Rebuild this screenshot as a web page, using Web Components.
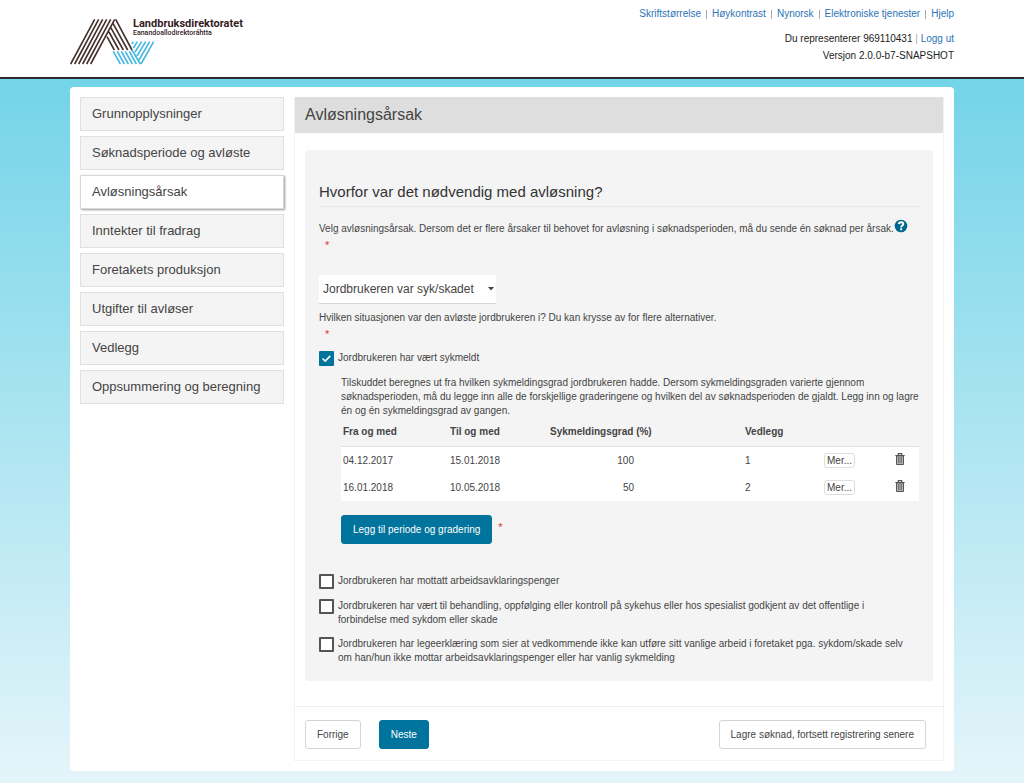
<!DOCTYPE html>
<html lang="no">
<head>
<meta charset="utf-8">
<meta name="viewport" content="width=device-width, initial-scale=1">
<title>Avløsningsårsak – Landbruksdirektoratet</title>
<style>
  html { min-height: 100%; }
  body {
    margin: 0;
    font: 10px/14px "Liberation Sans", Arial, sans-serif;
    color: #444;
    background: linear-gradient(#67d0e6, #e5f5fa);
    --accent: #00749c;
    --grey: #f4f4f4;
    --gutter: 70px;
  }
</style>
</head>
<body>
<site-header></site-header>
<app-shell>
  <step-menu slot="menu"></step-menu>
  <page-title>Avløsningsårsak</page-title>
  <question-card>
    <span slot="heading">Hvorfor var det nødvendig med avløsning?</span>
    <reason-select>Velg avløsningsårsak. Dersom det er flere årsaker til behovet for avløsning i søknadsperioden, må du sende én søknad per årsak.</reason-select>
    <situation-group>
      <span slot="legend">Hvilken situasjonen var den avløste jordbrukeren i? Du kan krysse av for flere alternativer.</span>
      <check-option checked>Jordbrukeren har vært sykmeldt</check-option>
      <sick-leave-periods></sick-leave-periods>
      <check-option>Jordbrukeren har mottatt arbeidsavklaringspenger</check-option>
      <check-option>Jordbrukeren har vært til behandling, oppfølging eller kontroll på sykehus eller hos spesialist godkjent av det offentlige i forbindelse med sykdom eller skade</check-option>
      <check-option>Jordbrukeren har legeerklæring som sier at vedkommende ikke kan utføre sitt vanlige arbeid i foretaket pga. sykdom/skade selv om han/hun ikke mottar arbeidsavklaringspenger eller har vanlig sykmelding</check-option>
    </situation-group>
  </question-card>
  <action-bar slot="actions">
    <app-button>Forrige</app-button>
    <app-button primary>Neste</app-button>
    <app-button slot="end">Lagre søknad, fortsett registrering senere</app-button>
  </action-bar>
</app-shell>

<script>
  const define = (name, html, setup) => {
    const template = document.createElement('template');
    template.innerHTML = html;
    customElements.define(name, class extends HTMLElement {
      constructor() {
        super();
        this.attachShadow({ mode: 'open' }).append(template.content.cloneNode(true));
      }
      connectedCallback() { if (setup) setup(this, this.shadowRoot); }
    });
  };

  define('site-logo', `
    <style>
      :host { display: block; }
      a { display: flex; color: #36211f; text-decoration: none; }
      svg { display: block; width: 85px; height: 47px; margin-right: -22px; }
      .name { font: bold 11px/11px Roboto, sans-serif; display: block; }
      .sami { font: 500 7px/8px Roboto, sans-serif; display: block; }
    </style>
    <a href="#">
      <svg viewBox="30 54 255 141" fill="none" stroke-width="4.8" aria-hidden="true">
        <path stroke="#44302c" d="M32 192L104 58M44 192L116 58M56 192L128 58M68 192L140 58M80 192L152 58M92 192L164 58M167 58L216 150M159 70L203 150M152 82L190 150M147 96L177 150M141 110L163 150"/>
        <path stroke="#45b8e2" d="M160 154L181 192M172 154L193 192M184 154L205 192M196 154L217 192M208 154L229 192M216 150L241 192M243 192L281 125M237 180L269 125M231 168L257 125M225 156L245 125M220 144L232 125M216 132L220 125"/>
      </svg>
      <span><span class="name">Landbruksdirektoratet</span><span class="sami">Eanandoallodirektoráhtta</span></span>
    </a>`);

  define('site-header', `
    <style>
      :host { display: block; background: #fff; color: #222; border-bottom: 2px solid #2b2b2b; }
      header { display: flex; justify-content: space-between; padding: 7px var(--gutter) 11px; }
      site-logo { margin-top: 11px; }
      nav { margin-bottom: 11px; }
      nav a + a { margin-left: 5px; padding-left: 6px; background: linear-gradient(#aaa, #aaa) 0 2px / 1px 10px no-repeat; }
      .info { text-align: right; white-space: nowrap; }
      p { margin: 0 0 3px; }
      a { color: #2c74b8; text-decoration: none; }
      i { color: #aaa; font-style: normal; }
    </style>
    <header>
      <site-logo></site-logo>
      <div class="info">
        <nav><a href="#">Skriftstørrelse</a><a href="#">Høykontrast</a><a href="#">Nynorsk</a><a href="#">Elektroniske tjenester</a><a href="#">Hjelp</a></nav>
        <p>Du representerer 969110431 <i>|</i> <a href="#">Logg ut</a></p>
        <p>Versjon 2.0.0-b7-SNAPSHOT</p>
      </div>
    </header>`);

  define('app-shell', `
    <style>
      :host { display: block; padding: 8px var(--gutter) 12px; }
      .sheet { display: grid; grid-template-columns: 204px minmax(0, 1fr); gap: 10px; padding: 10px; background: #fff; border-radius: 4px; }
      main { border: 1px solid #f3f3f3; border-top: 0; }
    </style>
    <div class="sheet">
      <slot name="menu"></slot>
      <main><slot></slot><slot name="actions"></slot></main>
    </div>`);

  define('step-menu', `
    <style>
      :host { display: block; }
      ul { list-style: none; margin: 0; padding: 0; display: grid; gap: 5px; }
      a { display: block; box-sizing: border-box; height: 34px; padding: 0 11px; font-size: 13px; line-height: 32px; color: #444; text-decoration: none; background: var(--grey); border: 1px solid #e0e0e0; }
      a[aria-current] { background: #fff; border-color: #d8d8d8; box-shadow: 1px 1px 2px #999; }
    </style>
    <nav aria-label="Steg"><ul>
      <li><a href="#">Grunnopplysninger</a></li>
      <li><a href="#">Søknadsperiode og avløste</a></li>
      <li><a href="#" aria-current="step">Avløsningsårsak</a></li>
      <li><a href="#">Inntekter til fradrag</a></li>
      <li><a href="#">Foretakets produksjon</a></li>
      <li><a href="#">Utgifter til avløser</a></li>
      <li><a href="#">Vedlegg</a></li>
      <li><a href="#">Oppsummering og beregning</a></li>
    </ul></nav>`);

  define('page-title', `
    <style>
      :host { display: block; background: #dedede; }
      h1 { margin: 0; padding: 0 10px; font-size: 16px; font-weight: normal; line-height: 36px; }
    </style>
    <h1><slot></slot></h1>`);

  define('question-card', `
    <style>
      :host { display: block; margin: 17px 10px 25px; padding: 32px 14px 6px; background: var(--grey); border-radius: 3px; }
      h2 { margin: 0 0 14px; padding-bottom: 4px; font-size: 15px; font-weight: normal; line-height: 20px; color: #333; border-bottom: 1px solid #e6e6e6; }
    </style>
    <h2><slot name="heading"></slot></h2>
    <slot></slot>`);

  define('required-mark', `
    <style>
      :host { color: #d33; font-size: 11px; }
    </style>
    <span aria-label="obligatorisk">*</span>`);

  define('help-button', `
    <style>
      :host { display: inline-block; vertical-align: bottom; }
      button { display: block; padding: 0; border: 0; background: none; }
      svg { display: block; width: 14px; height: 14px; }
    </style>
    <button type="button" aria-label="Hjelp">
      <svg viewBox="0 0 14 14" fill="none"><circle cx="7" cy="7" r="6.3" fill="#00678f"/><path d="M4.8 5.2C5 3.7 6 3.2 7.1 3.2c1.3 0 2.2.7 2.2 1.8C9.3 6.5 7.2 6.5 7.1 8.4" stroke="#fff" stroke-width="1.9"/><path d="M6.1 9.3h2v1.9h-2z" fill="#fff"/></svg>
    </button>`);

  define('reason-select', `
    <style>
      :host { display: block; }
      .question { display: flex; align-items: flex-start; line-height: 16px; }
      help-button { flex: none; margin-top: -2px; }
      required-mark { display: block; padding-left: 6px; line-height: 16px; }
      .field { position: relative; width: 177px; margin: 22px 0 7px; }
      select { appearance: none; display: block; width: 100%; height: 29px; padding: 0 4px; border: 0; border-bottom: 1px solid #d6d6d6; border-radius: 0; background: #fff; color: #444; font: 12px "Liberation Sans", Arial, sans-serif; }
      svg { position: absolute; right: 2px; top: 12px; width: 6px; height: 4px; pointer-events: none; }
    </style>
    <div class="question"><label for="reason"><slot></slot></label><help-button></help-button></div>
    <required-mark></required-mark>
    <div class="field">
      <select id="reason"><option>Jordbrukeren var syk/skadet</option></select>
      <svg viewBox="0 0 6 4" aria-hidden="true"><path d="M0 0h6L3 3.5z" fill="#444"/></svg>
    </div>`);

  define('situation-group', `
    <style>
      :host { display: block; }
      fieldset { min-width: 0; margin: 0; padding: 0; border: 0; }
      legend { padding: 0; }
      required-mark { display: block; padding-left: 6px; line-height: 16px; margin: 1px 0 9px; }
    </style>
    <fieldset>
      <legend><slot name="legend"></slot></legend>
      <required-mark></required-mark>
      <slot></slot>
    </fieldset>`);

  define('check-option', `
    <style>
      :host { display: block; margin-bottom: 10px; }
      label { display: flex; align-items: flex-start; gap: 4px; padding-right: 10px; }
      input { appearance: none; flex: none; box-sizing: border-box; width: 15px; height: 15px; margin: 0; border: 2px solid #555; border-radius: 1px; background: #fff; }
      input:checked { border: 0; background: var(--accent) url('data:image/svg+xml,<svg xmlns="http://www.w3.org/2000/svg" viewBox="0 0 15 15"><path d="M3.5 7.5l2.7 2.6 5.1-5.2" fill="none" stroke="white" stroke-width="1.6"/></svg>'); }
    </style>
    <label><input type="checkbox"><span><slot></slot></span></label>`,
    (host, root) => { root.querySelector('input').checked = host.hasAttribute('checked'); });

  define('trash-button', `
    <style>
      :host { display: block; }
      button { display: block; padding: 0 0 4px; border: 0; background: none; color: #555; }
      svg { display: block; width: 10px; height: 12px; }
    </style>
    <button type="button" aria-label="Slett periode">
      <svg viewBox="0 0 10 12" fill="none" stroke="currentColor"><path d="M.3 2.5h9.4M3.3 2.3V.7h3.4v1.6" stroke-width="1.2"/><path d="M1.5 3v8.5h7V3z" fill="#ccc"/><path d="M3.3 4v6.5M5 4v6.5M6.7 4v6.5" stroke-width=".9"/></svg>
    </button>`);

  define('app-button', `
    <style>
      :host { display: inline-block; }
      button { display: block; height: 29px; padding: 0 11px; border: 1px solid #d4d4d4; border-radius: 3px; background: #fff; color: #444; font: 10px "Liberation Sans", Arial, sans-serif; white-space: nowrap; }
      :host([primary]) button { border-color: var(--accent); background: var(--accent); color: #fff; }
    </style>
    <button type="button"><slot></slot></button>`);

  define('sick-leave-periods', `
    <style>
      :host { display: block; margin: 10px 0 30px 22px; }
      p { margin: 0; }
      table { width: 100%; table-layout: fixed; border-collapse: collapse; margin-bottom: 14px; }
      th, td { padding: 0 2px; text-align: left; }
      th { height: 28px; }
      td { height: 27px; }
      thead td { height: auto; }
      tbody { background: #fff; border-top: 1px solid #e2e2e2; }
      .grade { display: inline-block; width: 84px; text-align: right; }
      .more { display: block; height: 15px; padding: 0 2px; border: 1px solid #ddd; border-radius: 3px; background: #fff; color: #444; font: 10px/13px "Liberation Sans", Arial, sans-serif; }
      .add { display: flex; gap: 6px; }
      required-mark { margin-top: 5px; }
      .from { width: 103px; } .to { width: 96px; } .files { width: 75px; } .mer { width: 67px; } .del { width: 22px; }
    </style>
    <p>Tilskuddet beregnes ut fra hvilken sykmeldingsgrad jordbrukeren hadde. Dersom sykmeldingsgraden varierte gjennom søknadsperioden, må du legge inn alle de forskjellige graderingene og hvilken del av søknadsperioden de gjaldt. Legg inn og lagre én og én sykmeldingsgrad av gangen.</p>
    <table>
      <thead><tr><th class="from">Fra og med</th><th class="to">Til og med</th><th>Sykmeldingsgrad (%)</th><th class="files">Vedlegg</th><td class="mer"></td><td class="del"></td></tr></thead>
      <tbody>
        <tr><td>04.12.2017</td><td>15.01.2018</td><td><span class="grade">100</span></td><td>1</td><td><button class="more" type="button">Mer...</button></td><td><trash-button></trash-button></td></tr>
        <tr><td>16.01.2018</td><td>10.05.2018</td><td><span class="grade">50</span></td><td>2</td><td><button class="more" type="button">Mer...</button></td><td><trash-button></trash-button></td></tr>
      </tbody>
    </table>
    <div class="add"><app-button primary>Legg til periode og gradering</app-button><required-mark></required-mark></div>`);

  define('action-bar', `
    <style>
      :host { display: flex; gap: 18px; padding: 13px 17px 11px 10px; border-top: 1px solid #eee; }
      .end { margin-left: auto; }
    </style>
    <slot></slot><div class="end"><slot name="end"></slot></div>`);
</script>
</body>
</html>
